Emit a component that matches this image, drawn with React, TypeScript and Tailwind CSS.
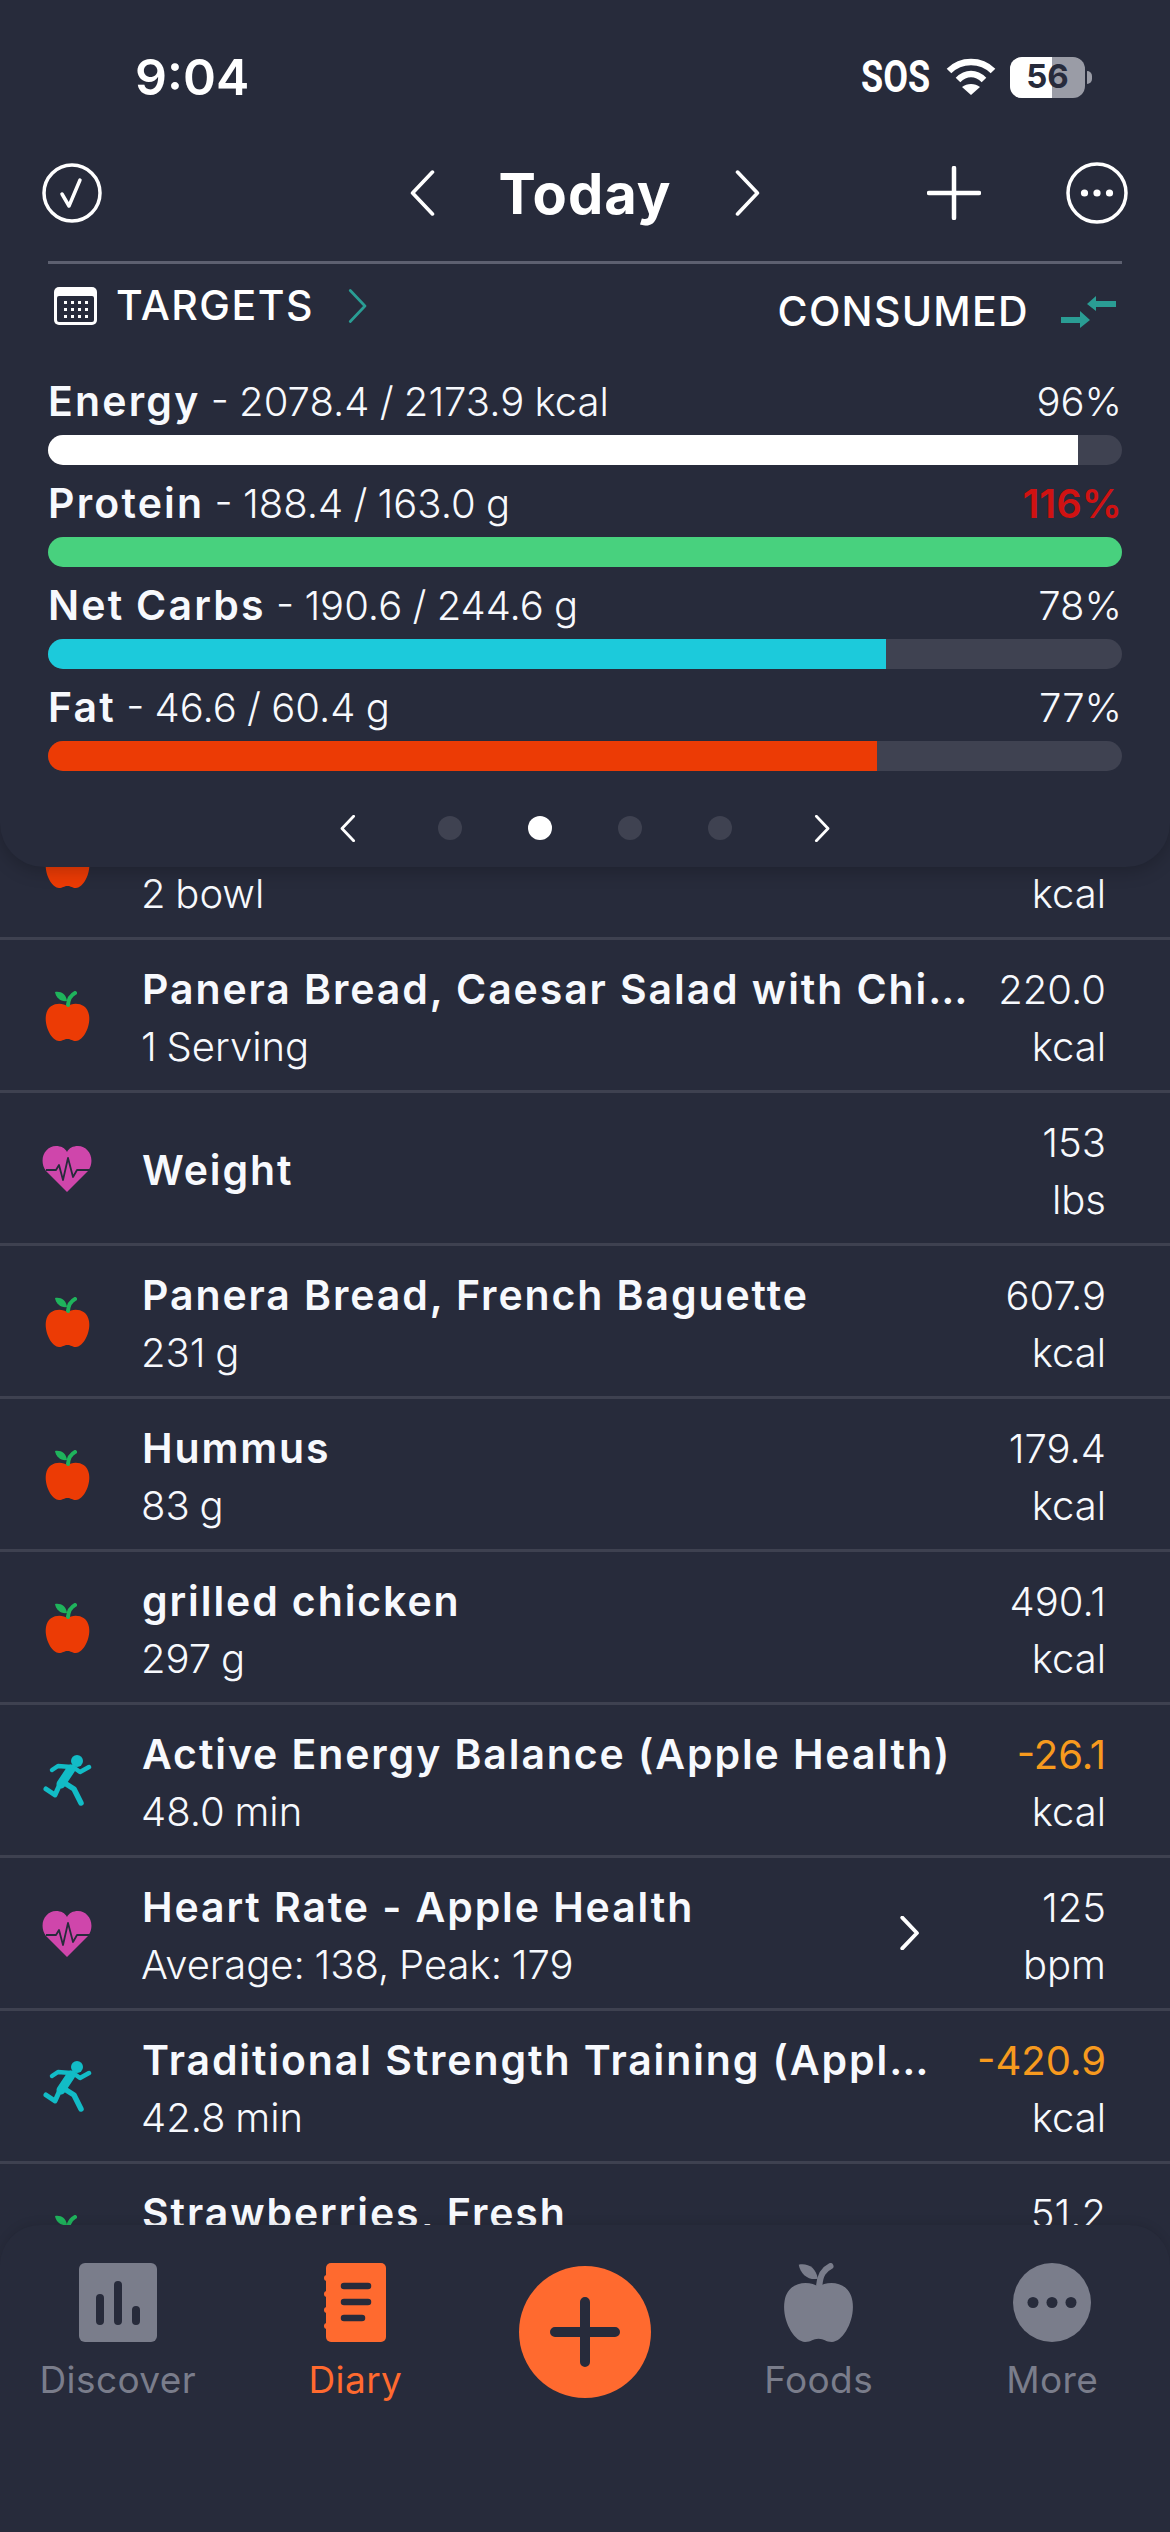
const items = [
  { kind: 'apple', title: '', sub: '2 bowl', value: '', unit: 'kcal' },
  { kind: 'apple', title: 'Panera Bread, Caesar Salad with Chi…', sub: '1 Serving', value: '220.0', unit: 'kcal' },
  { kind: 'heart', title: 'Weight', sub: '', value: '153', unit: 'lbs' },
  { kind: 'apple', title: 'Panera Bread, French Baguette', sub: '231 g', value: '607.9', unit: 'kcal' },
  { kind: 'apple', title: 'Hummus', sub: '83 g', value: '179.4', unit: 'kcal' },
  { kind: 'apple', title: 'grilled chicken', sub: '297 g', value: '490.1', unit: 'kcal' },
  { kind: 'run', title: 'Active Energy Balance (Apple Health)', sub: '48.0 min', value: '-26.1', unit: 'kcal', burn: true },
  { kind: 'heart', title: 'Heart Rate - Apple Health', sub: 'Average: 138, Peak: 179', value: '125', unit: 'bpm', arrow: true },
  { kind: 'run', title: 'Traditional Strength Training (Appl…', sub: '42.8 min', value: '-420.9', unit: 'kcal', burn: true },
  { kind: 'apple', title: 'Strawberries, Fresh', sub: '\u00a0', value: '51.2', unit: 'kcal' },
]

const macros = [
  { name: 'Energy', detail: '2078.4 / 2173.9 kcal', pct: '96%', fill: 'bg-white', width: 95.9 },
  { name: 'Protein', detail: '188.4 / 163.0 g', pct: '116%', fill: 'bg-[#48d17e]', width: 100, over: true },
  { name: 'Net Carbs', detail: '190.6 / 244.6 g', pct: '78%', fill: 'bg-[#1ccadb]', width: 78 },
  { name: 'Fat', detail: '46.6 / 60.4 g', pct: '77%', fill: 'bg-[#ec3b05]', width: 77.2 },
]

function Apple({ color = '#ec3b05', leaf = '#1fb35c', className = '' }) {
  return (
    <svg viewBox="0 0 45 50" className={className}>
      <path d="M22.5 15C17 11 3 11 1 24C-1 36 7 50 14 50C18 50 19 48 22.5 48C26 48 27 50 31 50C38 50 46 36 44 24C42 11 28 11 22.5 15Z" fill={color} />
      <path d="M10 1C16 0 21 3 22 10C16 11 11 7 10 1Z" fill={leaf} />
      <path d="M30 2C26 4 23.5 7 23 14" fill="none" stroke={leaf} strokeWidth="4" strokeLinecap="round" />
    </svg>
  )
}

function Heart() {
  return (
    <svg viewBox="0 0 50 48" className="w-[50px] h-[48px]">
      <path d="M25 47L4 26C-4 15 3 1 14 1C19 1 23 3 25 7C27 3 31 1 36 1C47 1 54 15 46 26Z" fill="#cf46ab" />
      <path d="M4 25H14L17 20L21 35L26 13L31 32L35 25H48" fill="none" stroke="#272b3b" strokeWidth="1.8" strokeLinejoin="round" />
    </svg>
  )
}

function Runner() {
  return (
    <svg viewBox="0 0 49 52" className="w-[49px] h-[52px]" fill="none" stroke="#12bcc6" strokeLinecap="round" strokeLinejoin="round">
      <circle cx="34" cy="6" r="6" fill="#12bcc6" stroke="none" />
      <path d="M28 14L18 29" strokeWidth="9" />
      <path d="M17 29L12 40L3 34" strokeWidth="5" />
      <path d="M20 27L31 34L38 48" strokeWidth="5.5" />
      <path d="M9 15L15 11L28 12" strokeWidth="4.5" />
      <path d="M30 12L37 17L46 12" strokeWidth="4.5" />
    </svg>
  )
}

function Chevron({ dir, className = '', color = 'white', width = 3.5 }: { dir: 'l' | 'r'; className?: string; color?: string; width?: number }) {
  return (
    <svg viewBox="0 0 24 44" className={className} fill="none" stroke={color} strokeWidth={width} strokeLinecap="round" strokeLinejoin="round">
      <path d={dir === 'l' ? 'M22 2L3 22L22 42' : 'M2 2L21 22L2 42'} />
    </svg>
  )
}

function Row({ item }: { item: (typeof items)[number] }) {
  return (
    <div className="h-[153px] shrink-0 border-b-[3px] border-[#3e4150] flex items-center pl-[42px] pr-[64px]">
      <div className="w-[50px] mt-[2px] flex justify-center shrink-0">
        {item.kind === 'apple' && <Apple className="w-[45px] h-[50px]" />}
        {item.kind === 'heart' && <Heart />}
        {item.kind === 'run' && <Runner />}
      </div>
      <div className="ml-[50px] pt-[5px] flex-1 min-w-0 text-[#f7f9fd]">
        <div className="min-h-[57px] text-[41px] leading-[57px] font-semibold tracking-[1.9px] whitespace-nowrap">{item.title}</div>
        {item.sub && <div className="text-[40px] leading-[57px] font-light [word-spacing:-1.5px] -ml-[1px] whitespace-nowrap">{item.sub}</div>}
      </div>
      {item.arrow && (
        <Chevron dir="r" color="white" width={5} className="w-[20px] h-[34px] mr-[103px]" />
      )}
      <div className="pt-[5px] text-right text-[40px] leading-[57px] font-light text-[#f7f9fd] whitespace-nowrap shrink-0">
        <div className={`min-h-[57px] ${item.burn ? 'text-[#f79a1e] font-normal' : ''}`}>{item.value}</div>
        <div>{item.unit}</div>
      </div>
    </div>
  )
}

function TabLabel({ children, active }: { children: string; active?: boolean }) {
  return <span className={`mt-[16px] text-[37px] leading-[44px] tracking-[0.4px] ${active ? 'text-[#ff6a2f]' : 'text-[#7a7d8b]'}`}>{children}</span>
}

export default function App() {
  return (
    <div className="w-[1170px] h-[2532px] flex flex-col overflow-hidden bg-[#272b3b] text-white font-['Inter',sans-serif]">
      <div className="relative z-10 h-[867px] shrink-0 bg-[#272b3b] rounded-b-[44px] shadow-[0_4px_18px_rgba(0,0,0,0.22)] px-[48px]">
        <div className="pt-[50px] h-[104px] flex items-center justify-between">
          <span className="ml-[87px] text-[50px] font-semibold">9:04</span>
          <div className="flex items-center mr-[30px]">
            <span className="w-[66px] text-[45px] font-bold font-['Roboto',sans-serif] scale-x-[0.8] origin-left">SOS</span>
            <svg viewBox="0 0 50 38" className="ml-[19px] w-[50px] h-[38px]" fill="none" stroke="white" strokeWidth="6.5">
              <path d="M3 13C15 1 35 1 47 13" />
              <path d="M12 22C20 14 30 14 38 22" />
              <path d="M25 37L16 29C21 25 29 25 34 29Z" fill="white" stroke="none" />
            </svg>
            <div className="relative ml-[14px] w-[75px] h-[41px] rounded-[12px] bg-[#9a9ca6] overflow-hidden flex items-center justify-center">
              <div className="absolute left-0 top-0 bottom-0 w-[42px] bg-white" />
              <span className="relative text-[33px] font-bold text-[#272b3b]">56</span>
            </div>
            <div className="ml-[2px] w-[5px] h-[13px] rounded-r-full bg-[#9a9ca6]" />
          </div>
        </div>
        <div className="mt-[59px] h-[60px] flex items-center relative">
          <svg viewBox="0 0 60 60" className="absolute left-[-6px] w-[60px] h-[60px]" fill="none" stroke="white" strokeWidth="3.5" strokeLinecap="round" strokeLinejoin="round">
            <circle cx="30" cy="30" r="28" />
            <path d="M20 31L27 43L38 17" />
          </svg>
          <div className="flex-1 flex items-center justify-center">
            <Chevron dir="l" className="w-[26px] h-[46px]" />
            <span className="mx-[64px] pt-[2px] text-[56px] leading-[60px] font-bold tracking-[1px]">Today</span>
            <Chevron dir="r" className="w-[26px] h-[46px]" />
          </div>
          <svg viewBox="0 0 54 54" className="absolute left-[879px] w-[54px] h-[54px]" stroke="white" strokeWidth="4.5" strokeLinecap="round">
            <path d="M27 2V52M2 27H52" />
          </svg>
          <svg viewBox="0 0 62 62" className="absolute right-[-6px] w-[62px] h-[62px]" fill="white">
            <circle cx="31" cy="31" r="29" fill="none" stroke="white" strokeWidth="3.5" />
            <circle cx="18.5" cy="31" r="3.6" />
            <circle cx="31" cy="31" r="3.6" />
            <circle cx="43.5" cy="31" r="3.6" />
          </svg>
        </div>
        <div className="mt-[38px] h-[3px] bg-[#5d6070]" />
        <div className="h-[105px] pt-[22px] flex justify-between items-start">
          <div className="h-[40px] flex items-center ml-[6px]">
            <svg viewBox="0 0 43 38" className="w-[43px] h-[38px]">
              <rect width="43" height="38" rx="5" fill="white" />
              <rect x="3" y="9" width="37" height="26" rx="2" fill="#272b3b" />
              {[14, 21, 28].map((y) =>
                [10, 17, 24, 31].map((x) => <rect key={`${x}-${y}`} x={x} y={y} width="3" height="3" fill="white" />)
              )}
            </svg>
            <span className="ml-[19px] text-[41px] font-medium tracking-[1.5px]">TARGETS</span>
            <Chevron dir="r" color="#2a9d94" width={3.5} className="ml-[34px] w-[20px] h-[34px]" />
          </div>
          <div className="h-[40px] mt-[6px] flex items-center">
            <span className="text-[41px] font-medium tracking-[1.3px]">CONSUMED</span>
            <svg viewBox="0 0 55 34" className="ml-[32px] mr-[6px] w-[55px] h-[34px]" fill="#2a9d94">
              <path d="M55 6H35V1L26 9L35 16V12H55Z" />
              <path d="M0 22H19V16L29 25L19 33V28H0Z" />
            </svg>
          </div>
        </div>
        {macros.map((m) => (
          <div key={m.name} className="h-[102px]">
            <div className="h-[66px] flex items-center justify-between text-[40px]">
              <span className="text-[#f7f9fd] whitespace-nowrap [word-spacing:-1px]">
                <span className="text-[41px] font-semibold tracking-[2.2px]">{m.name}</span>
                <span className="font-light"> - {m.detail}</span>
              </span>
              <span className={m.over ? 'font-semibold text-[#d01212]' : 'font-light text-[#f7f9fd]'}>{m.pct}</span>
            </div>
            <div className="h-[30px] rounded-full overflow-hidden bg-[#3f4251]">
              <div className={`h-full ${m.fill}`} style={{ width: `${m.width}%` }} />
            </div>
          </div>
        ))}
        <div className="-mt-[6px] h-[96px] pt-[18px] flex items-center justify-center gap-[82px]">
          <Chevron dir="l" width={4.5} className="w-[17px] h-[27px]" />
          <div className="flex gap-[66px]">
            <div className="w-[24px] h-[24px] rounded-full bg-[#3f4251]" />
            <div className="w-[24px] h-[24px] rounded-full bg-white" />
            <div className="w-[24px] h-[24px] rounded-full bg-[#3f4251]" />
            <div className="w-[24px] h-[24px] rounded-full bg-[#3f4251]" />
          </div>
          <Chevron dir="r" width={4.5} className="w-[17px] h-[27px]" />
        </div>
      </div>

      <div className="-mt-[80px] flex-1 min-h-0 overflow-hidden">
        {items.map((item, i) => (
          <Row key={i} item={item} />
        ))}
      </div>

      <div className="relative z-10 h-[307px] shrink-0 bg-[#272b3b] rounded-t-[40px] shadow-[0_-2px_10px_rgba(0,0,0,0.1)] pt-[38px] px-px grid grid-cols-5 content-start">
        <div className="flex flex-col items-center">
          <svg viewBox="0 0 78 79" className="w-[78px] h-[79px]">
            <rect width="78" height="79" rx="6" fill="#7a7d8b" />
            <g stroke="#272b3b" strokeWidth="8" strokeLinecap="round">
              <path d="M21 35V58M39 22V58M57 47V58" />
            </g>
          </svg>
          <TabLabel>Discover</TabLabel>
        </div>
        <div className="flex flex-col items-center pl-[8px]">
          <svg viewBox="0 0 62 79" className="w-[62px] h-[79px]">
            <rect x="2" width="60" height="79" rx="5" fill="#ff6a2f" />
            <g fill="#ff6a2f">
              <circle cx="3" cy="15" r="3" />
              <circle cx="3" cy="31" r="3" />
              <circle cx="3" cy="47" r="3" />
              <circle cx="3" cy="63" r="3" />
            </g>
            <g stroke="#272b3b" strokeWidth="6.5" strokeLinecap="round">
              <path d="M20 23H44M20 39H44M20 55H38" />
            </g>
          </svg>
          <TabLabel active>Diary</TabLabel>
        </div>
        <div className="flex justify-center pt-[3px]">
          <div className="w-[132px] h-[132px] rounded-full bg-[#ff6a2f] flex items-center justify-center">
            <svg viewBox="0 0 70 70" className="w-[70px] h-[70px]" stroke="#272b3b" strokeWidth="10" strokeLinecap="round">
              <path d="M35 5V65M5 35H65" />
            </svg>
          </div>
        </div>
        <div className="flex flex-col items-center">
          <Apple color="#7a7d8b" leaf="#7a7d8b" className="w-[71px] h-[79px]" />
          <TabLabel>Foods</TabLabel>
        </div>
        <div className="flex flex-col items-center">
          <svg viewBox="0 0 78 79" className="w-[78px] h-[79px]">
            <ellipse cx="39" cy="39.5" rx="39" ry="39.5" fill="#7a7d8b" />
            <g fill="#272b3b">
              <circle cx="20" cy="39.5" r="5.5" />
              <circle cx="39" cy="39.5" r="5.5" />
              <circle cx="58" cy="39.5" r="5.5" />
            </g>
          </svg>
          <TabLabel>More</TabLabel>
        </div>
      </div>
    </div>
  )
}
